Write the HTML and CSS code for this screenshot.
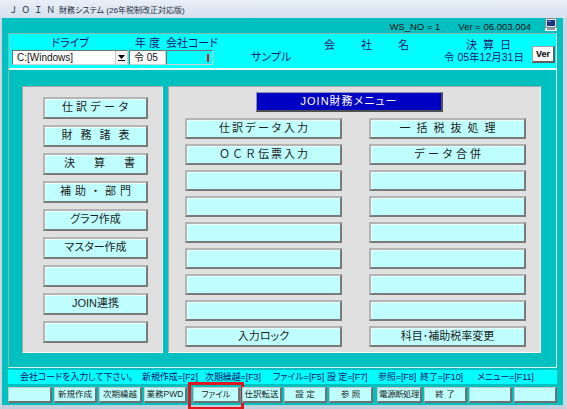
FILE: index.html
```html
<!DOCTYPE html>
<html lang="ja">
<head>
<meta charset="utf-8">
<title>JOIN財務システム</title>
<link rel="stylesheet" href="styles.css">
</head>
<body>
<div class="win">
  <div class="titlebar"><span class="t-join">ＪＯＩＮ</span>財務システム (26年税制改正対応版)</div>
  <div class="client">
    <div class="inforow">
      <span class="ws">WS_NO = 1</span>
      <span class="ver">Ver = 06.003.004</span>
      <svg class="mon" width="12" height="13" viewBox="0 0 12 13">
        <rect x="0" y="0" width="12" height="13" fill="#f4f6f8"/>
        <rect x="0.5" y="0.5" width="11" height="9" fill="#dfe6ee" stroke="#7d8b99"/>
        <rect x="2" y="2" width="8" height="6" fill="#1c357e"/>
        <rect x="3" y="3" width="3" height="1" fill="#6d8fd8"/>
        <rect x="2" y="10" width="8" height="2" fill="#8e9cab"/>
      </svg>
    </div>

    <div class="frame">
      <div class="header">
        <div class="hcol drive">
          <div class="hlabel center">ドライブ</div>
          <div class="combo">
            <span class="combo-text">C:[Windows]</span>
            <span class="combo-btn"><svg width="7" height="6" viewBox="0 0 7 6"><path d="M0 0H7L3.5 4Z" fill="#000"/><rect x="0" y="5" width="7" height="1" fill="#000"/></svg></span>
          </div>
        </div>
        <div class="hcol year">
          <div class="hlabel center">年 度</div>
          <div class="field white">令 05</div>
        </div>
        <div class="hcol code">
          <div class="hlabel">会社コード</div>
          <div class="field cyan"><span class="caret"></span></div>
        </div>
        <div class="hcol company">
          <div class="hlabel lower name-label">会社名</div>
          <div class="hvalue">サンプル</div>
        </div>
        <div class="hcol date">
          <div class="hlabel lower date-label">決算日</div>
          <div class="hvalue date-value">令 05年12月31日</div>
        </div>
        <div class="verbtn">Ver</div>
      </div>

      <div class="main">
        <div class="panel left-panel">
          <div class="btn ls3">仕訳データ</div>
          <div class="btn ls8">財務諸表</div>
          <div class="btn ls19">決算書</div>
          <div class="btn ls4">補助・部門</div>
          <div class="btn plain">グラフ作成</div>
          <div class="btn plain">マスター作成</div>
          <div class="btn"></div>
          <div class="btn plain">JOIN連携</div>
          <div class="btn"></div>
        </div>
        <div class="panel right-panel">
          <div class="menu-title">JOIN財務メニュー</div>
          <div class="menu-grid">
            <div class="btn ls2">仕訳データ入力</div>
            <div class="btn ls6">一括税抜処理</div>
            <div class="btn ls2">ＯＣＲ伝票入力</div>
            <div class="btn ls3">データ合併</div>
            <div class="btn"></div><div class="btn"></div>
            <div class="btn"></div><div class="btn"></div>
            <div class="btn"></div><div class="btn"></div>
            <div class="btn"></div><div class="btn"></div>
            <div class="btn"></div><div class="btn"></div>
            <div class="btn"></div><div class="btn"></div>
            <div class="btn plain">入力ロック</div>
            <div class="btn plain">科目･補助税率変更</div>
          </div>
        </div>
      </div>
    </div>

    <div class="status">
      <span>会社コードを入力して下さい。</span>
      <span>新規作成=[F2]</span>
      <span>次期繰越=[F3]</span>
      <span>ファイル=[F5]</span>
      <span>設 定=[F7]</span>
      <span>参照=[F8]</span>
      <span>終了=[F10]</span>
      <span>メニュー=[F11]</span>
    </div>

    <div class="fkeys">
      <div class="fk"></div>
      <div class="fk">新規作成</div>
      <div class="fk">次期繰越</div>
      <div class="fk">業務PWD</div>
      <div class="fk file">ファイル</div>
      <div class="fk">仕訳転送</div>
      <div class="fk">設 定</div>
      <div class="fk">参 照</div>
      <div class="fk narrow">電源断処理</div>
      <div class="fk">終 了</div>
      <div class="fk"></div>
      <div class="fk"></div>
    </div>
  </div>
</div>
</body>
</html>
```

FILE: styles.css
```css
* { box-sizing: border-box; }

body {
  margin: 0;
  font-family: "Liberation Sans", "Noto Sans CJK JP", sans-serif;
  color: #1a1a1a;
}

.win {
  width: 567px;
  height: 409px;
  overflow: hidden;
  background: #00c0c0;
  position: relative;
}

.titlebar {
  height: 18px;
  background: linear-gradient(#e8eff8, #d5e1ef);
  font-size: 8px;
  line-height: 10px;
  padding: 5px 0 0 9px;
  color: #1e2b3a;
  white-space: nowrap;
  font-feature-settings: "palt";
}
.t-join {
  letter-spacing: 4px;
  font-size: 8.5px;
  font-feature-settings: normal;
}

.client {
  height: 391px;
  border-left: 2px solid #cdd7e3;
  border-right: 4px solid #cdd7e3;
  border-bottom: 4px solid #c4cfdc;
}

/* info row */
.inforow {
  height: 15px;
  display: flex;
  align-items: flex-start;
  padding-right: 6px;
  font-size: 9.5px;
  color: #101010;
  white-space: nowrap;
}
.ws { margin-left: auto; line-height: 15px; margin-top: 1px; }
.ver { margin-left: 18px; line-height: 15px; margin-top: 1px; }
.mon { margin-left: 14px; margin-top: 0; display: block; }

/* frame */
.frame {
  margin-left: 6px;
  width: 549px;
  height: 335px;
  border: 1px solid #8cb4b4;
  border-right-color: #d8f4f4;
  border-bottom-color: #d8f4f4;
}

.header {
  height: 36px;
  background: #00ffff;
  border-bottom: 2px solid #e6ffff;
  display: flex;
  padding: 2px 0 0 3px;
  font-feature-settings: "palt";
}
.hcol { display: flex; flex-direction: column; }
.hlabel {
  height: 14px;
  font-size: 11px;
  line-height: 14px;
  color: #14146e;
  white-space: nowrap;
}
.hlabel.center { text-align: center; }
.hlabel.lower { padding-top: 2px; }
.hvalue {
  height: 15px;
  font-size: 11px;
  line-height: 15px;
  color: #14146e;
  white-space: nowrap;
}
.hvalue.date-value { font-size: 10.5px; }

.drive { width: 116px; }
.combo {
  height: 15px;
  background: #fff;
  border: 1px solid #707070;
  border-right-color: #d0d0d0;
  border-bottom-color: #d0d0d0;
  display: flex;
  align-items: center;
}
.combo-text {
  flex: 1;
  font-size: 10px;
  padding-left: 4px;
  color: #111;
}
.combo-btn {
  width: 12px;
  height: 13px;
  border-left: 1px solid #c8c8c8;
  display: flex;
  align-items: center;
  justify-content: center;
  background: #f4f4f4;
}
.combo-btn svg { display: block; }

.year { width: 37px; margin-left: 1px; }
.field {
  height: 15px;
  border: 1px solid #707070;
  border-right-color: #d0d0d0;
  border-bottom-color: #d0d0d0;
  font-size: 10px;
  line-height: 13px;
  padding-left: 4px;
  position: relative;
}
.field.white { background: #fff; color: #111; }
.field.cyan { background: #00ffff; }
.caret {
  position: absolute;
  left: 40px;
  top: 3px;
  width: 2px;
  height: 8px;
  background: #e01010;
}
.code { width: 47px; }

.company { width: 195px; margin-left: 36px; }
.name-label { padding-left: 75px; letter-spacing: 26px; }
.company .hvalue { padding-left: 2px; }

.date { width: 80px; }
.date-label { padding-left: 22px; letter-spacing: 6px; }

.verbtn {
  width: 23px;
  height: 17px;
  margin: 10px 0 0 8px;
  background: #fafafa;
  border: 1px solid #a0a0a0;
  border-right: 2px solid #606060;
  border-bottom: 2px solid #606060;
  font-size: 9px;
  font-weight: bold;
  line-height: 14px;
  text-align: center;
  color: #000;
}

/* main */
.main {
  display: flex;
  padding: 16px 0 0 13px;
}
.panel {
  height: 267px;
  background: #e0e0e0;
  border: 1px solid #a8a8a8;
  border-right-color: #f8f8f8;
  border-bottom-color: #f8f8f8;
}
.left-panel {
  width: 141px;
  padding: 10px 0 0 20px;
  display: flex;
  flex-direction: column;
  gap: 6px;
}
.left-panel .btn { width: 105px; height: 22px; }

.right-panel {
  width: 373px;
  margin-left: 5px;
  padding: 5px 0 0 16px;
}
.menu-title {
  width: 187px;
  height: 20px;
  margin-left: 71px;
  background: #0000c4;
  border: 1px solid #9090b0;
  border-right: 2px solid #505050;
  border-bottom: 2px solid #505050;
  color: #fff;
  font-size: 11px;
  line-height: 17px;
  text-align: center;
  letter-spacing: 1px;
  font-feature-settings: "palt";
}
.menu-grid {
  margin-top: 6px;
  display: grid;
  grid-template-columns: 157px 157px;
  grid-auto-rows: 21px;
  column-gap: 27px;
  row-gap: 5px;
}

.btn {
  background: #c0ffff;
  border: 2px solid;
  border-color: #b4b4b4 #7a7a7a #7a7a7a #b4b4b4;
  box-shadow: inset 1px 1px 0 #ecffff;
  font-size: 11px;
  line-height: 17px;
  text-align: center;
  color: #1c1c1c;
  white-space: nowrap;
}
.btn.plain { font-feature-settings: "palt"; }
.ls2 { letter-spacing: 2px; padding-left: 2px; }
.ls3 { letter-spacing: 3px; padding-left: 3px; }
.ls4 { letter-spacing: 4px; padding-left: 4px; }
.ls6 { letter-spacing: 6px; padding-left: 6px; }
.ls8 { letter-spacing: 8px; padding-left: 8px; }
.ls19 { letter-spacing: 19px; padding-left: 19px; }

/* status */
.status {
  margin: 2px 0 0 6px;
  width: 549px;
  height: 14px;
  background: #00ffff;
  display: grid;
  grid-template-columns: 122px 63px 68px 54px 51px 42px 57px auto;
  padding-left: 12px;
  font-size: 9px;
  line-height: 14px;
  letter-spacing: -0.1px;
  color: #10106a;
  white-space: nowrap;
  font-feature-settings: "palt";
  overflow: hidden;
}

/* function keys */
.fkeys {
  margin: 3px 0 0 6px;
  display: grid;
  grid-template-columns: 44px 43px 43px 43px 51px 40px 43px 44px 47px 43px 43px 43px;
  column-gap: 2px;
  height: 16px;
}
.fk {
  background: #c0ffff;
  border: 1px solid #c8c8c8;
  border-right: 2px solid #707070;
  border-bottom: 2px solid #707070;
  font-size: 8.5px;
  line-height: 13px;
  text-align: center;
  color: #1c1c1c;
  white-space: nowrap;
  font-feature-settings: "palt";
  position: relative;
}
.fk.file { margin-left: 4px; }
.fk.narrow { letter-spacing: -0.5px; margin-left: 2px; }
.fk.file::after {
  content: "";
  position: absolute;
  left: -6px;
  right: -6px;
  top: -6px;
  bottom: -9px;
  border: 3px solid #e3151c;
}
```
